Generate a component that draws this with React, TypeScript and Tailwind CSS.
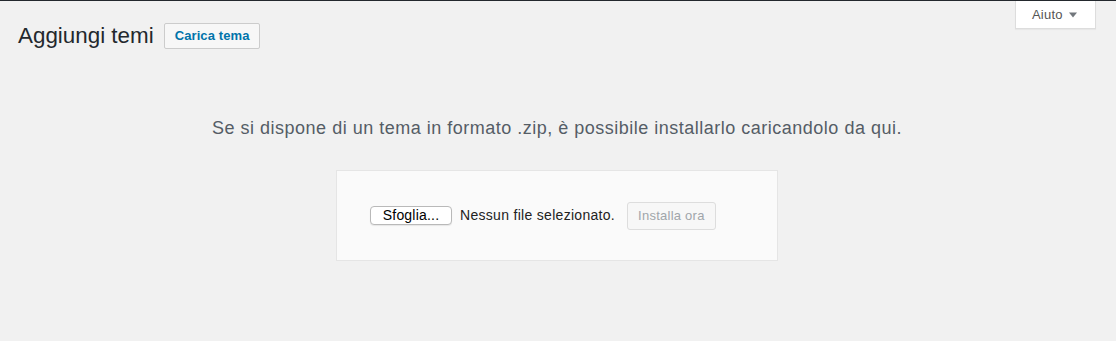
import React from "react";

export default function App() {
  return (
    <div className="h-[341px] w-full overflow-hidden bg-[#f1f1f1] font-['Liberation_Sans',Arial,sans-serif]">
      <div className="h-px bg-[#23282d]" />
      <div className="flex items-start pl-[18px] pr-[20px]">
        <h1 className="mt-[20px] text-[22.4px] leading-[30px] font-normal text-[#23282d]">
          Aggiungi temi
        </h1>
        <button className="ml-[10px] mt-[22px] h-[26px] rounded-[2px] border border-[#cccccc] bg-[#f7f7f7] px-[10px] text-[13px] font-bold tracking-[0.1px] text-[#0073aa]">
          Carica tema
        </button>
        <div className="ml-auto flex h-[28px] w-[81px] items-center border border-t-0 border-[#dddddd] bg-white pl-[16px] shadow-[0_1px_1px_rgba(0,0,0,0.04)]">
          <span className="text-[13px] tracking-[0.2px] text-[#555555]">Aiuto</span>
          <svg width="8" height="6" viewBox="0 0 8 6" className="ml-[6px]">
            <polygon points="0,0.5 8,0.5 4,5.5" fill="#72777c" />
          </svg>
        </div>
      </div>
      <div className="pl-[18px] pr-[20px]">
        <p className="mt-[65px] text-center text-[18px] leading-[24px] tracking-[0.5px] text-[#555d66]">
          Se si dispone di un tema in formato .zip, è possibile installarlo caricandolo da qui.
        </p>
        <div className="mx-auto mt-[30px] flex h-[91px] w-[442px] items-center border border-[#e5e5e5] bg-[#fafafa] px-[30px]">
          <button className="ml-[3px] h-[19px] w-[82px] shrink-0 rounded-[4px] border border-[#b9b9b9] bg-white text-[14px] leading-[17px] tracking-[0.2px] text-black shadow-[0_1px_1px_rgba(0,0,0,0.08)]">
            Sfoglia...
          </button>
          <span className="ml-[8px] whitespace-nowrap text-[14px] tracking-[0.3px] text-[#222222]">
            Nessun file selezionato.
          </span>
          <button className="ml-[12px] h-[28px] shrink-0 rounded-[3px] border border-[#dddddd] bg-[#f7f7f7] px-[10px] text-[13px] tracking-[0.25px] text-[#a0a5aa]">
            Installa ora
          </button>
        </div>
      </div>
    </div>
  );
}
